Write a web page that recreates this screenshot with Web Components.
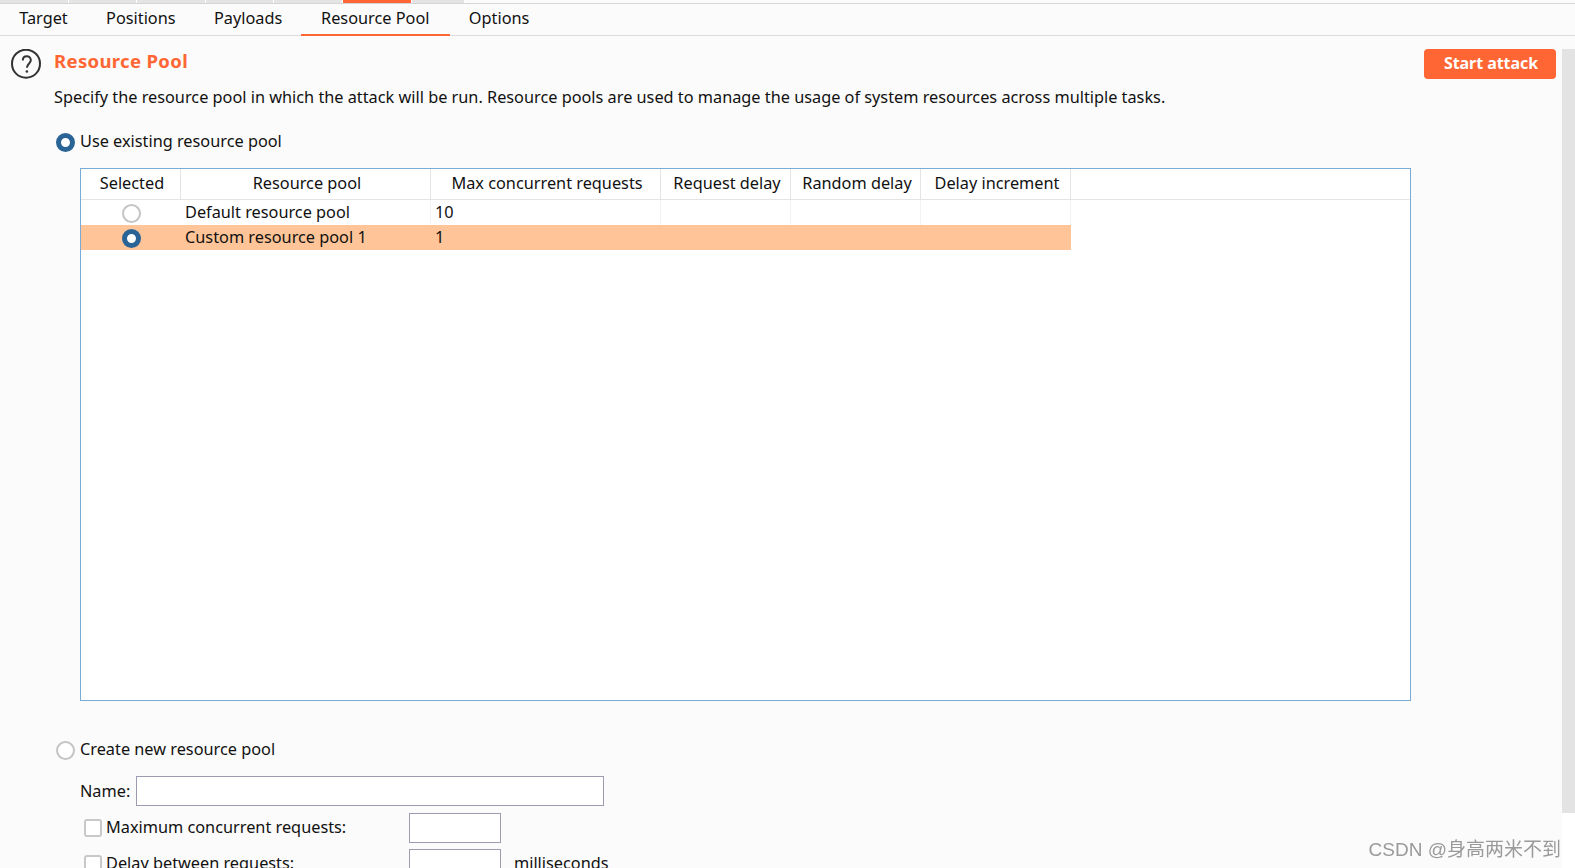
<!DOCTYPE html>
<html>
<head>
<meta charset="utf-8">
<title>Resource Pool</title>
<style>
  html, body { margin: 0; height: 100%; overflow: hidden; }
  body {
    background: #fbfbfb;
    color: #111;
    font: 16.3px "Noto Sans", "Noto Sans CJK SC", sans-serif;
  }
</style>
</head>
<body>
<template id="tab-bar-tpl">
  <style>
    :host { display: block; height: 36px; box-sizing: border-box; border-bottom: 1px solid #dcdcdc; }
    .strip { display: flex; height: 4px; border-bottom: 1px solid #d5d5d5; box-sizing: border-box; }
    .strip span { width: 68.6px; background: #e4e4e4; border-right: 1px solid #fff; box-sizing: border-box; }
    .strip .on { background: #ff6633; }
    .strip .fill { width: 53px; }
    .tabs { display: flex; height: 31px; }
  </style>
  <div class="strip">
    <span></span><span></span><span></span><span></span><span></span><span class="on"></span><span class="fill"></span>
  </div>
  <div class="tabs"><slot></slot></div>
</template>

<template id="bar-tab-tpl">
  <style>
    :host { display: flex; align-items: center; justify-content: center; box-sizing: border-box; height: 32px; padding: 0 19.2px 4px; }
    :host([active]) { border-bottom: 2px solid #ff6633; padding: 0 20.2px 2px 19.6px; }
  </style>
  <slot></slot>
</template>

<template id="radio-mark-tpl">
  <style>
    :host { display: inline-block; flex: none; box-sizing: border-box; width: 19px; height: 19px; border-radius: 50%; background: #fff; border: 2px solid #c4c4c4; }
    :host([checked]) { border: 5px solid #2a6496; }
  </style>
</template>

<template id="pool-table-tpl">
  <style>
    :host { display: block; box-sizing: border-box; height: 533px; border: 1px solid #7aabd6; background: #fff; }
    .head, .row { display: grid; grid-template-columns: 100px 250px 230px 130px 130px 150px; width: 990px; }
    .head { height: 31px; width: 100%; border-bottom: 1px solid #e4e4e4; box-sizing: border-box; }
    .head div { display: flex; align-items: center; justify-content: center; border-right: 1px solid #e4e4e4; padding: 0 0 3px 3px; }
    .row { height: 25px; align-items: stretch; }
    .row div { display: flex; align-items: center; padding-left: 4px; box-sizing: border-box; border-right: 1px solid #f3f3f3; padding-bottom: 2px; }
    .row .mark { justify-content: center; padding: 2px 0 0; border: 0; }
    .row.sel { background: #ffc497; }
    .row.sel div { border: 0; }
  </style>
  <div class="head">
    <div>Selected</div><div>Resource pool</div><div>Max concurrent requests</div><div>Request delay</div><div>Random delay</div><div>Delay increment</div>
  </div>
  <div class="row">
    <div class="mark"><radio-mark></radio-mark></div><div>Default resource pool</div><div>10</div><div></div><div></div><div></div>
  </div>
  <div class="row sel">
    <div class="mark"><radio-mark checked></radio-mark></div><div>Custom resource pool 1</div><div>1</div><div></div><div></div><div></div>
  </div>
</template>

<template id="text-box-tpl">
  <style>
    :host { display: block; flex: none; box-sizing: border-box; height: 30px; background: #fff; border: 1px solid #9c9cb0; }
  </style>
</template>

<template id="check-mark-tpl">
  <style>
    :host { display: block; flex: none; box-sizing: border-box; width: 18px; height: 18px; border-radius: 3px; background: #fff; border: 2px solid #c8c8c8; }
  </style>
</template>

<template id="option-row-tpl">
  <style>
    :host { display: flex; align-items: center; height: 30px; padding-left: 4px; margin-top: 6px; }
    .label { width: 307px; padding-left: 4px; box-sizing: border-box; padding-bottom: 2px; }
    text-box { width: 92px; }
    .unit { margin-left: 13px; padding-bottom: 2px; }
  </style>
  <check-mark></check-mark>
  <div class="label"><slot></slot></div>
  <text-box></text-box>
  <div class="unit"><slot name="unit"></slot></div>
</template>

<template id="pool-panel-tpl">
  <style>
    :host { display: block; position: relative; height: 832px; overflow: hidden; }
    .top { display: flex; padding: 13px 19px 0 11px; }
    .help { flex: none; width: 32px; height: 32px; margin-right: 11px; }
    .intro { flex: 1; }
    h1 { margin: 0; font-size: 18.5px; line-height: 24px; font-weight: 700; color: #ff6633; letter-spacing: .35px; }
    p { margin: 12px 0 0; line-height: 24px; }
    button {
      flex: none; width: 132px; height: 30px; border: 0; border-radius: 4px;
      background: #ff6633; color: #fff; font: 700 16px "Noto Sans", sans-serif; letter-spacing: -.05px; padding: 0 0 2px 2px;
    }
    .choice { display: flex; align-items: center; gap: 5px; height: 24px; margin-left: 56px; }
    .choice radio-mark { margin-top: 2px; }
    .first { margin-top: 20px; }
    .second { margin-top: 36px; }
    pool-table { margin: 15px 0 0 80px; width: 1331px; }
    .form { margin-left: 80px; }
    .name { display: flex; align-items: center; margin: 15px 0 7px; height: 30px; }
    .name span { width: 56px; }
    .name text-box { width: 468px; }
    .scroll { position: absolute; right: 0; top: 13px; width: 13px; height: 764px; background: #e3e3e3; }
    .shade { position: absolute; right: 0; top: 777px; bottom: 0; width: 13px; background: #fff; }
  </style>
  <div class="top">
    <svg class="help" viewBox="0 0 32 32" fill="none" stroke="#333">
      <circle cx="15" cy="14.700" r="14" stroke-width="2"/>
      <path d="M11.800 11.500c0-2.800 1.900-4.300 4-4.300s4 1.500 4 4c0 3.500-3.900 3.600-3.900 7.500" stroke-width="2"/>
      <circle cx="15.900" cy="22.500" r="1.300" fill="#333" stroke="none"/>
    </svg>
    <div class="intro">
      <h1>Resource Pool</h1>
      <p>Specify the resource pool in which the attack will be run. Resource pools are used to manage the usage of system resources across multiple tasks.</p>
    </div>
    <button>Start attack</button>
  </div>
  <div class="choice first"><radio-mark checked></radio-mark>Use existing resource pool</div>
  <pool-table></pool-table>
  <div class="choice second"><radio-mark></radio-mark>Create new resource pool</div>
  <div class="form">
    <div class="name"><span>Name:</span><text-box></text-box></div>
    <option-row style="margin-top:0">Maximum concurrent requests:</option-row>
    <option-row>Delay between requests:<span slot="unit">milliseconds</span></option-row>
  </div>
  <div class="scroll"></div>
  <div class="shade"></div>
</template>

<template id="water-mark-tpl">
  <style>
    :host { position: fixed; right: 14px; bottom: 7px; color: #9a9a9a; font: 19px "Liberation Sans", "Noto Sans CJK SC", sans-serif; }
  </style>
  <slot></slot>
</template>

<tab-bar>
  <bar-tab>Target</bar-tab>
  <bar-tab>Positions</bar-tab>
  <bar-tab>Payloads</bar-tab>
  <bar-tab active>Resource Pool</bar-tab>
  <bar-tab>Options</bar-tab>
</tab-bar>
<pool-panel></pool-panel>
<water-mark>CSDN @身高两米不到</water-mark>

<script>
  // every element here is just a template stamped into an open shadow root
  const names = ['tab-bar', 'bar-tab', 'radio-mark', 'pool-table', 'text-box', 'check-mark', 'option-row', 'pool-panel', 'water-mark'];
  names.forEach((name) => {
    customElements.define(name, class extends HTMLElement {
      constructor() {
        super();
        this.attachShadow({ mode: 'open' });
        const tpl = document.getElementById(name + '-tpl');
        this.shadowRoot.appendChild(tpl.content.cloneNode(true));
      }
    });
  });
</script>
</body>
</html>
